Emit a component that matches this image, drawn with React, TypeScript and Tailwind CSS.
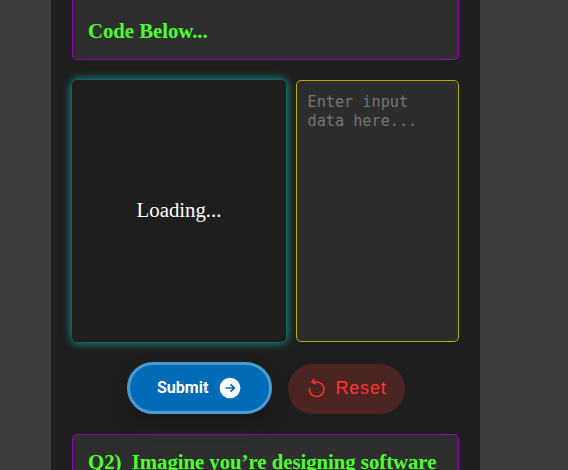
function SubmitButton() {
  return (
    <button className="flex h-[52px] w-[145px] items-center justify-start gap-[9px] rounded-full border-[3px] border-[#4d9bd2] bg-[#006cb7] pl-[27px] font-['Roboto','Liberation_Sans',sans-serif] text-base font-bold text-white shadow-[0_10px_20px_rgba(0,0,0,0.2)]">
      <span className="w-[53px] text-left whitespace-nowrap">Submit</span>
      <svg className="size-[22px]" viewBox="0 0 24 24">
        <circle cx="12" cy="12" r="11.3" fill="white" />
        <path d="M7.2 12h9.4M12.6 8l4 4-4 4" fill="none" stroke="#006cb7" strokeWidth="1.9" />
      </svg>
    </button>
  );
}

function ResetButton() {
  return (
    <button className="flex h-[50px] w-[117px] translate-y-px items-center rounded-[25px] bg-[#4c2422] pb-0.5 pl-5 font-['Liberation_Sans',Arial,sans-serif] text-[18px] text-[#ff342f]">
      <svg className="mr-[9.5px] h-[20px] w-[18px] shrink-0" viewBox="0 0 18 20" fill="none" stroke="currentColor" strokeWidth="1.5">
        <path d="M1.4 10.2A7.3 7.3 0 1 0 8.7 4H4" />
        <path d="M6.4.9 4 4l3.6 2.2" />
      </svg>
      <span className="tracking-[0.8px]">Reset</span>
    </button>
  );
}

export default function App() {
  return (
    <div className="flex h-[470px] w-[568px] overflow-hidden bg-[#3c3c3c] pl-[51px] font-['Liberation_Serif','Times_New_Roman',serif]">
      <main className="h-full w-[429px] shrink-0 overflow-hidden bg-[#1e1e1e] pr-[21px] pl-[21px]">
        <section className="h-[60px] w-[387px] rounded-b-[5px] border border-t-0 border-[#9400b8] bg-[#2e2e2e] px-[15px] pt-[19px]">
          <h2 className="text-[20.8px] leading-6 font-bold tracking-[-0.04px] text-[#4dff2e]">Code Below...</h2>
        </section>
        <div className="mt-5 flex h-[262px] w-[387px] gap-[10px]">
          <div className="flex w-[214px] items-center justify-center rounded-[5px] bg-[#1e1e1e] pb-0.5 text-[20.8px] text-white shadow-[0_0_10px_#10b5b5]">
            Loading...
          </div>
          <textarea
            className="w-[163px] resize-none rounded-[5px] border border-[#b5b000] bg-[#2d2d2d] pt-[12px] pr-[9px] pl-[10.5px] font-['DejaVu_Sans_Mono',monospace] text-[15.2px] leading-[19px] placeholder:text-[#757575]"
            placeholder="Enter input data here..."
          />
        </div>
        <div className="mt-5 ml-[55px] flex items-center gap-4">
          <SubmitButton />
          <ResetButton />
        </div>
        <section className="mt-5 h-[60px] w-[387px] rounded-t-[5px] border border-[#9400b8] bg-[#2e2e2e] px-[15px] pt-[15px]">
          <h2 className="text-[20.8px] leading-6 font-bold tracking-[-0.04px] whitespace-pre text-[#4dff2e]">Q2)  Imagine you’re designing software</h2>
        </section>
      </main>
    </div>
  );
}
